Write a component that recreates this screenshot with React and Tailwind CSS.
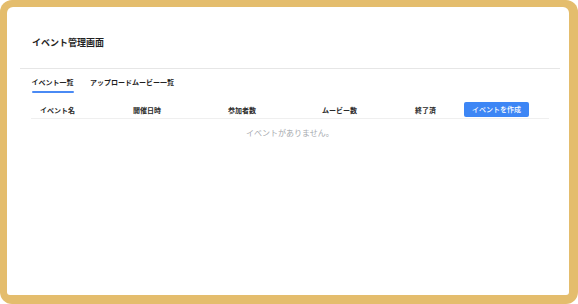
const COLUMNS = ['イベント名', '開催日時', '参加者数', 'ムービー数', '終了済'];

function Tabs() {
  return (
    <div className="ml-[24.5px] mt-[8px] flex gap-[16.5px]">
      <div className="flex flex-col">
        <span className="text-[7px] leading-[10px] font-bold text-[#1f1f1f]">イベント一覧</span>
        <span className="mt-[4px] h-[2px] w-[42px] rounded-full bg-[#4a8af4]" />
      </div>
      <span className="text-[7px] leading-[10px] font-bold text-[#1f1f1f]">アップロードムービー一覧</span>
    </div>
  );
}

function EventTable() {
  return (
    <div className="ml-[24px] mr-[20px] mt-[8px]">
      <div className="grid h-[18px] grid-cols-[93px_95px_94px_93px_49px_1fr] items-center border-b border-[#efefef]">
        {COLUMNS.map(label => (
          <span key={label} className="px-[9px] text-[7px] leading-[10px] font-bold text-[#2a2a2a]">
            {label}
          </span>
        ))}
        <div className="px-[9px]">
          <button className="flex h-[15px] w-[65px] items-center justify-center rounded-[2px] bg-[#3d86f5] text-[7px] font-medium text-white">
            イベントを作成
          </button>
        </div>
      </div>
      <p className="mt-[8px] text-center text-[8px] leading-[12px] text-[#a6a9ae]">
        イベントがありません。
      </p>
    </div>
  );
}

export default function App() {
  return (
    <div
      className="h-[304px] w-[578px] rounded-[12px] bg-[#e4bd6d] pb-[9px] pl-[7px] pr-[9px] pt-[7px]"
      style={{ fontFamily: '"Noto Sans CJK JP", "Noto Sans", sans-serif' }}
    >
      <div className="h-full rounded-[6px] rounded-b-[3px] bg-white">
        <div className="ml-[13px] mr-[9px] border-b border-[#e6e6e6] pb-[19px] pl-[12px] pt-[30px]">
          <h1 className="text-[9px] leading-[12px] font-bold text-[#1f1f1f]">イベント管理画面</h1>
        </div>
        <Tabs />
        <EventTable />
      </div>
    </div>
  );
}
